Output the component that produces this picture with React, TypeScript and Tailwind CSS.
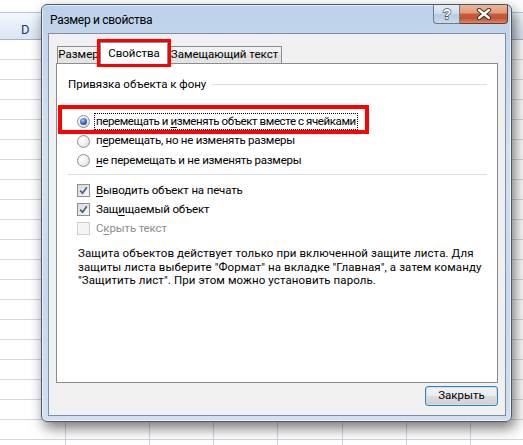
import React from "react"

const cols = [66, 84, 64, 64, 65, 64, 64, 64]
const rows = Array.from({ length: 21 })

function Radio({ checked }: { checked?: boolean }) {
  return (
    <span className="flex h-[13px] w-[13px] shrink-0 items-center justify-center rounded-full border border-[#8e8f8f] bg-[radial-gradient(circle_at_35%_35%,#ffffff_0%,#f1f1f1_45%,#d4d4d4_100%)]">
      {checked && (
        <span className="h-[7px] w-[7px] rounded-full bg-[radial-gradient(circle_at_40%_35%,#a9cdf5_0%,#2e63b3_55%,#18397a_100%)]" />
      )}
    </span>
  )
}

function Check({ checked, disabled }: { checked?: boolean; disabled?: boolean }) {
  return (
    <span
      className={
        disabled
          ? "flex h-[13px] w-[13px] shrink-0 items-center justify-center border border-[#cfcfcf] bg-[#f4f4f4]"
          : "flex h-[13px] w-[13px] shrink-0 items-center justify-center border border-[#8e8f8f] bg-[linear-gradient(135deg,#d9d9d9_0%,#f7f7f7_100%)]"
      }
    >
      {checked && (
        <svg width="9" height="9" viewBox="0 0 9 9">
          <path d="M1.2 4.6 L3.6 7.2 L7.8 1.2" fill="none" stroke="#4b5f86" strokeWidth="1.7" />
        </svg>
      )}
    </span>
  )
}

export default function App() {
  return (
    <div className="relative h-[445px] w-[523px] overflow-hidden whitespace-nowrap bg-white font-['Roboto',sans-serif] text-[11.5px] text-black">
      {/* Excel sheet behind the dialog */}
      <div className="flex flex-col">
        <div className="h-[13px] border-b border-[#b8c8dc]" />
        <div className="flex h-[27px] border-b border-[#9eb6ce] bg-[linear-gradient(180deg,#f3f7fb_0%,#e4ecf7_60%,#dbe5f1_100%)]">
          {cols.map((w, i) => (
            <div key={i} style={{ width: w }} className="shrink-0 border-r border-[#9eb6ce] pl-[21px] pt-[7px] text-[13px] text-[#1f3c6e]">
              {i === 0 ? "D" : ""}
            </div>
          ))}
        </div>
        {rows.map((_, r) => (
          <div key={r} className="flex h-[20px] border-b border-[#d0d7e5]">
            {cols.map((w, i) => (
              <div key={i} style={{ width: w }} className="shrink-0 border-r border-[#d0d7e5]" />
            ))}
          </div>
        ))}
      </div>

      {/* Dialog window */}
      <div className="absolute left-[41px] top-[4px] flex h-[418px] w-[471px] flex-col rounded-[6px] border border-[#4e5966] bg-[linear-gradient(180deg,#bcd2ea_0%,#d3e2f2_35%,#c6d9ee_70%,#d0e0f1_100%)] shadow-[3px_6px_14px_rgba(0,0,0,0.55),inset_0_0_0_1px_rgba(255,255,255,0.6)]">
        <div className="flex h-[28px] shrink-0 items-start justify-between">
          <div className="pl-[8px] pt-[7px] text-[12px] leading-[16px] tracking-[-0.3px] text-black">Размер и свойства</div>
          <div className="mr-[3px] flex">
            <div className="flex h-[19px] w-[27px] items-center justify-center rounded-bl-[4px] border border-t-0 border-[#6f7a86] bg-[linear-gradient(180deg,#e3ecf6_0%,#cfdced_50%,#b8cbe2_51%,#c9d9ec_100%)]">
              <svg width="12" height="14" viewBox="0 0 12 14">
                <text x="6" y="12" textAnchor="middle" fontSize="14" fontWeight="bold" fontFamily="Liberation Sans, sans-serif" fill="#fff" stroke="#4a4f57" strokeWidth="1.4" paintOrder="stroke">?</text>
              </svg>
            </div>
            <div className="flex h-[19px] w-[48px] items-center justify-center rounded-br-[4px] border border-l-0 border-t-0 border-[#6b3a2c] bg-[linear-gradient(180deg,#ecb69a_0%,#e29a78_45%,#c8593a_50%,#c25536_75%,#d98a6a_100%)]">
              <svg width="16" height="12" viewBox="0 0 16 12">
                <path d="M3 2 L13 10 M13 2 L3 10" stroke="#3b2a26" strokeWidth="4.2" strokeLinecap="round" />
                <path d="M3 2 L13 10 M13 2 L3 10" stroke="#fff" strokeWidth="2.4" strokeLinecap="round" />
              </svg>
            </div>
          </div>
        </div>

        <div className="mb-[5px] ml-[6px] mr-[5px] flex flex-1 flex-col border border-[#7e8fa4] bg-[#f0f0f0] px-[7px] pt-[8px]">
          {/* tabs */}
          <div className="flex items-end pl-[1px]">
            <div className="flex h-[17px] w-[43px] items-center justify-center border border-b-0 border-[#898c95] bg-[linear-gradient(180deg,#f3f3f3_0%,#ebebeb_50%,#dedede_51%,#e6e6e6_100%)]">
              Размер
            </div>
            <div className="relative z-10 -mb-px flex h-[22px] w-[68px] items-center justify-center border border-b-0 border-[#898c95] bg-white">
              Свойства
            </div>
            <div className="flex h-[17px] w-[114px] items-center justify-center border border-b-0 border-l-0 border-[#898c95] bg-[linear-gradient(180deg,#f3f3f3_0%,#ebebeb_50%,#dedede_51%,#e6e6e6_100%)]">
              Замещающий текст
            </div>
          </div>

          {/* panel */}
          <div className="flex h-[320px] flex-col border border-[#898c95] bg-white">
            <div className="flex items-center gap-[6px] pl-[11px] pr-[10px] pt-[12px] leading-[16px]">
              <span>Привязка объекта к фону</span>
              <span className="h-px flex-1 bg-[#d5dfe5]" />
            </div>

            <div className="mt-[19px] flex flex-col pl-[20px] tracking-[-0.25px]">
              <div className="flex h-[20px] items-center gap-[4px]">
                <Radio checked />
                <span className="border border-dotted border-black px-[1px] leading-[15px] tracking-[-0.4px]">
                  перемещать и <u className="underline-offset-2">и</u>зменять объект вместе с ячейками
                </span>
              </div>
              <div className="flex h-[20px] items-center gap-[6px]">
                <Radio />
                <span>
                  п<u className="underline-offset-2">е</u>ремещать, но не изменять размеры
                </span>
              </div>
              <div className="flex h-[19px] items-center gap-[6px]">
                <Radio />
                <span>
                  <u className="underline-offset-2">н</u>е перемещать и не изменять размеры
                </span>
              </div>
            </div>

            <div className="ml-[11px] mr-[10px] mt-[4px] h-px bg-[#d5dfe5]" />

            <div className="mt-[6px] flex flex-col pl-[20px] tracking-[-0.15px]">
              <div className="flex h-[19px] items-center gap-[6px]">
                <Check checked />
                <span>
                  <u className="underline-offset-2">В</u>ыводить объект на печать
                </span>
              </div>
              <div className="flex h-[19px] items-center gap-[6px]">
                <Check checked />
                <span>
                  Защ<u className="underline-offset-2">и</u>щаемый объект
                </span>
              </div>
              <div className="flex h-[19px] items-center gap-[6px] text-[#8d8d8d]">
                <Check disabled />
                <span>
                  С<u className="underline-offset-2">к</u>рыть текст
                </span>
              </div>
            </div>

            <p className="mt-[9px] pl-[21px] leading-[13.5px] tracking-[0.1px]">
              Защита объектов действует только при включенной защите листа. Для
              <br />
              защиты листа выберите "Формат" на вкладке "Главная", а затем команду
              <br />
              "Защитить лист". При этом можно установить пароль.
            </p>
          </div>

          <div className="flex justify-end pt-[3px]">
            <button className="flex h-[20px] w-[73px] items-center justify-center rounded-[3px] border border-[#3c7fb1] bg-[linear-gradient(180deg,#f2f2f2_0%,#ebebeb_50%,#dddddd_51%,#cfcfcf_100%)] shadow-[inset_0_0_0_1px_#bfe3f7]">
              Закрыть
            </button>
          </div>
        </div>
      </div>

      {/* red annotation frames */}
      <div className="absolute left-[97px] top-[39px] h-[28px] w-[74px] border-[4px] border-[#ff0000]" />
      <div className="absolute left-[58px] top-[105px] h-[29px] w-[311px] border-[4px] border-[#ff0000]" />
    </div>
  )
}
